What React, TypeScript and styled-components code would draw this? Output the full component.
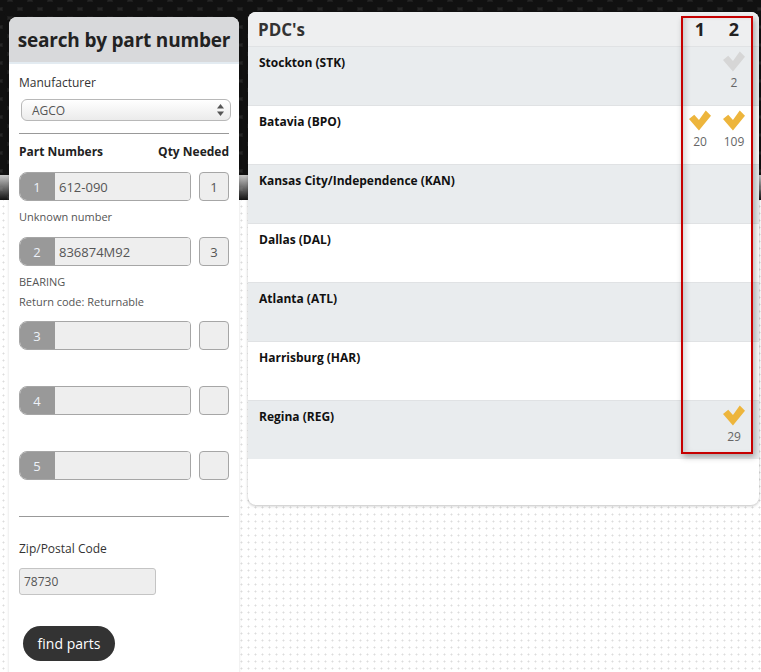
import React from 'react';
import styled, { createGlobalStyle } from 'styled-components';

const GlobalStyle = createGlobalStyle`
  html, body {
    margin: 0;
    padding: 0;
  }
  body {
    font-family: 'Open Sans', 'Noto Sans', sans-serif;
    color: #333;
    background-color: #fff;
    background-image: radial-gradient(circle, #dcdcdc 0.8px, transparent 1.2px);
    background-size: 7px 7px;
  }
`;

const Page = styled.div`
  position: relative;
  display: flex;
  align-items: flex-start;
  gap: 9px;
  padding: 12px 2px 0 9px;
  min-height: 672px;
  box-sizing: border-box;

  &::before {
    content: '';
    position: absolute;
    left: 0;
    right: 0;
    top: 0;
    height: 200px;
    z-index: 0;
    background:
      linear-gradient(#00000000 175px, #c9c9c9 175px, #ffffff00 200px),
      radial-gradient(circle at 50% 50%, #111 0 7px, transparent 8px) 0 0 / 20px 18px,
      radial-gradient(circle at 50% 50%, #111 0 7px, transparent 8px) 10px 9px / 20px 18px,
      #262626;
  }
`;

const LeftPanel = styled.section`
  position: relative;
  z-index: 1;
  width: 230px;
  margin-top: 5px;
  min-height: 680px;
  background: #fff;
  border-radius: 8px 8px 0 0;
  box-shadow: 0 0 3px rgba(0, 0, 0, 0.15);
  overflow: hidden;
`;

const LeftHeader = styled.header`
  height: 45px;
  background: #d8d9db;
  border-bottom: 2px solid #e3ebf1;
  display: flex;
  align-items: center;
  justify-content: center;
`;

const Title = styled.h1`
  margin: 0;
  font-size: 19px;
  font-weight: 700;
  color: #222;
  letter-spacing: -0.2px;
`;

const LeftBody = styled.div`
  padding: 11px 10px 0 10px;
`;

const Label = styled.div`
  font-size: 12px;
  line-height: 16px;
  color: #333;
`;

const Select = styled.div`
  margin: 8px -2px 0 2px;
  height: 20px;
  border: 1px solid #b8b8b8;
  border-radius: 6px;
  background: linear-gradient(#ffffff, #ebebeb);
  box-shadow: inset 0 1px 0 #fff;
  display: flex;
  align-items: center;
  justify-content: space-between;
  padding: 0 6px 0 10px;
  font-size: 12px;
  color: #555;
`;

const Divider = styled.hr<{ $top: number }>`
  margin: ${(p) => p.$top}px 0 0 0;
  border: 0;
  border-top: 1px solid #999;
  height: 0;
`;

const ColumnHeads = styled.div`
  margin-top: 10px;
  display: flex;
  justify-content: space-between;
  font-size: 12px;
  font-weight: 700;
  line-height: 16px;
  color: #222;
`;

const PartList = styled.div`
  margin-top: 12px;
`;

const PartBlock = styled.div`
  min-height: 65px;
  box-sizing: border-box;
`;

const PartRow = styled.div`
  display: flex;
  align-items: stretch;
  height: 29px;
`;

const PartField = styled.div`
  flex: 0 0 172px;
  display: flex;
  border: 1px solid #a6a6a6;
  border-radius: 8px 4px 4px 8px;
  overflow: hidden;
  box-sizing: border-box;
`;

const PartIndex = styled.div`
  width: 34px;
  background: #999;
  color: #eef2f8;
  font-size: 13px;
  display: flex;
  align-items: center;
  justify-content: center;
`;

const PartValue = styled.div`
  flex: 1;
  background: #eee;
  border-left: 1px solid #999;
  display: flex;
  align-items: center;
  padding-left: 4px;
  font-size: 13px;
  color: #555;
`;

const QtyBox = styled.div`
  margin-left: auto;
  width: 30px;
  box-sizing: border-box;
  border: 1px solid #a6a6a6;
  border-radius: 4px;
  background: #eee;
  display: flex;
  align-items: center;
  justify-content: center;
  font-size: 13px;
  color: #555;
`;

const Notes = styled.div`
  padding: 6px 0 9px;
`;

const Note = styled.div`
  font-size: 11px;
  line-height: 20px;
  color: #555;
`;

const ZipLabel = styled(Label)`
  margin-top: 24px;
`;

const ZipInput = styled.div`
  margin-top: 11px;
  width: 137px;
  height: 27px;
  box-sizing: border-box;
  border: 1px solid #c4c4c4;
  border-radius: 3px;
  background: #eee;
  display: flex;
  align-items: center;
  padding-left: 4px;
  font-size: 12px;
  color: #555;
`;

const FindButton = styled.button`
  margin: 31px 0 0 4px;
  height: 35px;
  width: 92px;
  border: 0;
  border-radius: 18px;
  background: #333;
  color: #fff;
  font-family: 'Open Sans', 'Noto Sans', sans-serif;
  font-size: 14px;
  padding: 0;
  cursor: pointer;
`;

const RightPanel = styled.section`
  position: relative;
  z-index: 1;
  flex: 1;
  background: #fff;
  border-radius: 8px;
  box-shadow: 0 1px 3px rgba(0, 0, 0, 0.25);
  padding-bottom: 46px;
`;

const PdcHeader = styled.header`
  height: 34px;
  background: #eeeff0;
  border-radius: 8px 8px 0 0;
  display: flex;
  align-items: center;
  padding: 0 0 0 10px;
`;

const PdcTitle = styled.h2`
  margin: 0;
  flex: 1;
  font-size: 17px;
  font-weight: 700;
  color: #333;
`;

const ColHead = styled.div`
  width: 34px;
  text-align: center;
  font-size: 18px;
  font-weight: 700;
  color: #222;
  &:last-child {
    margin-right: 8px;
  }
`;

const PdcRow = styled.div<{ $shade: boolean }>`
  height: 58px;
  border-top: 1px solid #e0e2e4;
  background: ${(p) => (p.$shade ? '#e9ecee' : '#fff')};
  display: flex;
  padding-left: 11px;
`;

const PdcName = styled.div`
  flex: 1;
  padding-top: 7px;
  font-size: 12px;
  font-weight: 700;
  color: #111;
`;

const StockCell = styled.div`
  width: 34px;
  padding-top: 4px;
  display: flex;
  flex-direction: column;
  align-items: center;
  &:last-child {
    margin-right: 8px;
  }
`;

const StockCount = styled.div`
  margin-top: 2px;
  font-size: 12px;
  color: #666;
`;

const Highlight = styled.div`
  position: absolute;
  top: 4px;
  right: 6px;
  width: 72px;
  height: 438px;
  box-sizing: border-box;
  border: 2px solid #c60000;
  box-shadow: 2px 3px 6px rgba(0, 0, 0, 0.3), inset 5px 0 6px -3px rgba(0, 0, 0, 0.18);
  pointer-events: none;
`;

const Check = ({ color }: { color: string }) => (
  <svg width="22" height="21" viewBox="0 0 21 20">
    <polygon points="0,8.5 5,4.5 9.5,9.5 16,0.5 21,5.5 9.5,19.5" fill={color} />
  </svg>
);

const SelectArrows = () => (
  <svg width="7" height="12" viewBox="0 0 7 12">
    <polygon points="3.5,0 7,4.5 0,4.5" fill="#555" />
    <polygon points="0,7.5 7,7.5 3.5,12" fill="#555" />
  </svg>
);

type Part = { n: number; value: string; qty: string; notes: string[] };

const parts: Part[] = [
  { n: 1, value: '612-090', qty: '1', notes: ['Unknown number'] },
  { n: 2, value: '836874M92', qty: '3', notes: ['BEARING', 'Return code: Returnable'] },
  { n: 3, value: '', qty: '', notes: [] },
  { n: 4, value: '', qty: '', notes: [] },
  { n: 5, value: '', qty: '', notes: [] },
];

type Stock = { count: number; active: boolean } | null;

const pdcs: { name: string; stock: [Stock, Stock] }[] = [
  { name: 'Stockton (STK)', stock: [null, { count: 2, active: false }] },
  { name: 'Batavia (BPO)', stock: [{ count: 20, active: true }, { count: 109, active: true }] },
  { name: 'Kansas City/Independence (KAN)', stock: [null, null] },
  { name: 'Dallas (DAL)', stock: [null, null] },
  { name: 'Atlanta (ATL)', stock: [null, null] },
  { name: 'Harrisburg (HAR)', stock: [null, null] },
  { name: 'Regina (REG)', stock: [null, { count: 29, active: true }] },
];

const App = () => {
  return (
    <>
      <GlobalStyle />
      <Page>
        <LeftPanel>
          <LeftHeader>
            <Title>search by part number</Title>
          </LeftHeader>
          <LeftBody>
            <Label>Manufacturer</Label>
            <Select>
              <span>AGCO</span>
              <SelectArrows />
            </Select>
            <Divider $top={12} />
            <ColumnHeads>
              <span>Part Numbers</span>
              <span>Qty Needed</span>
            </ColumnHeads>
            <PartList>
              {parts.map((p) => (
                <PartBlock key={p.n}>
                  <PartRow>
                    <PartField>
                      <PartIndex>{p.n}</PartIndex>
                      <PartValue>{p.value}</PartValue>
                    </PartField>
                    <QtyBox>{p.qty}</QtyBox>
                  </PartRow>
                  {p.notes.length > 0 && (
                    <Notes>
                      {p.notes.map((note) => (
                        <Note key={note}>{note}</Note>
                      ))}
                    </Notes>
                  )}
                </PartBlock>
              ))}
            </PartList>
            <Divider $top={0} />
            <ZipLabel>Zip/Postal Code</ZipLabel>
            <ZipInput>78730</ZipInput>
            <FindButton>find parts</FindButton>
          </LeftBody>
        </LeftPanel>
        <RightPanel>
          <PdcHeader>
            <PdcTitle>PDC's</PdcTitle>
            <ColHead>1</ColHead>
            <ColHead>2</ColHead>
          </PdcHeader>
          {pdcs.map((pdc, i) => (
            <PdcRow key={pdc.name} $shade={i % 2 === 0}>
              <PdcName>{pdc.name}</PdcName>
              {pdc.stock.map((s, j) => (
                <StockCell key={j}>
                  {s && (
                    <>
                      <Check color={s.active ? '#edb53c' : '#d6d6d6'} />
                      <StockCount>{s.count}</StockCount>
                    </>
                  )}
                </StockCell>
              ))}
            </PdcRow>
          ))}
          <Highlight />
        </RightPanel>
      </Page>
    </>
  );
};

export default App;
